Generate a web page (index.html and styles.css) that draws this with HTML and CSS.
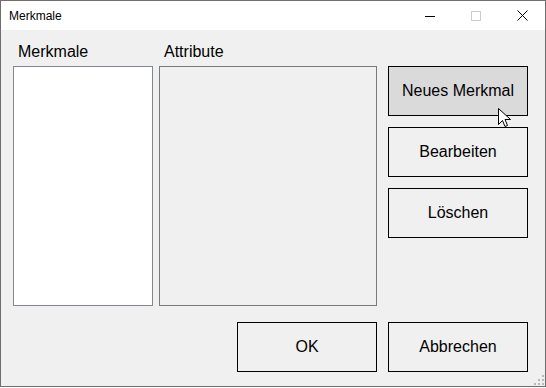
FILE: index.html
```html
<!DOCTYPE html>
<html lang="de">
<head>
  <meta charset="UTF-8" />
  <title>Merkmale</title>
  <link rel="stylesheet" href="styles.css">
</head>
<body>
  <div class="window">
    <div class="titlebar">
      <span class="title">Merkmale</span>
      <div class="caption">
        <span class="cap-btn"><svg width="10" height="10" viewBox="0 0 10 10"><path d="M0 5.5H10" stroke="#000" stroke-width="1"/></svg></span>
        <span class="cap-btn"><svg width="10" height="10" viewBox="0 0 10 10"><rect x="0.5" y="0.5" width="9" height="9" fill="none" stroke="#ccc"/></svg></span>
        <span class="cap-btn"><svg width="11" height="11" viewBox="0 0 11 11"><path d="M0.5 0.5L10.5 10.5M10.5 0.5L0.5 10.5" stroke="#000" stroke-width="1"/></svg></span>
      </div>
    </div>

    <div class="client">
      <div class="panes">
        <div class="pane-label">Merkmale</div>
        <div class="pane-label">Attribute</div>
        <div class="list list-merkmale"></div>
        <div class="list list-attribute"></div>
        <div class="side-buttons">
          <button class="btn btn-hover">Neues Merkmal</button>
          <button class="btn">Bearbeiten</button>
          <button class="btn">Löschen</button>
        </div>
      </div>

      <div class="footer">
        <button class="btn">OK</button>
        <button class="btn">Abbrechen</button>
      </div>

      <!-- size grip -->
      <svg class="grip" width="10" height="10" viewBox="0 0 10 10">
        <rect x="8" y="0" width="2" height="2" fill="#b8b8b8"/>
        <rect x="4" y="4" width="2" height="2" fill="#b8b8b8"/>
        <rect x="8" y="4" width="2" height="2" fill="#b8b8b8"/>
        <rect x="0" y="8" width="2" height="2" fill="#b8b8b8"/>
        <rect x="4" y="8" width="2" height="2" fill="#b8b8b8"/>
        <rect x="8" y="8" width="2" height="2" fill="#b8b8b8"/>
      </svg>
    </div>

    <!-- mouse pointer -->
    <svg class="cursor" width="13" height="20" viewBox="0 0 13 20">
      <path d="M0.5 0.5V16.5L4.5 12.5L7 18.5L9.5 17.5L7 11.5H12.5Z" fill="#fff" stroke="#000" stroke-width="1" stroke-linejoin="miter"/>
    </svg>
  </div>
</body>
</html>
```

FILE: styles.css
```css
body { margin: 0; background: #fff; font-family: "Liberation Sans", Arial, sans-serif; }

.window {
  position: relative;
  width: 546px;
  height: 387px;
  box-sizing: border-box;
  border: 1px solid #6e6e6e;
  background: #f0f0f0;
  display: flex;
  flex-direction: column;
}

/* Title bar */
.titlebar { height: 29px; background: #fff; display: flex; align-items: center; }
.title { padding-left: 8px; font-size: 12px; color: #000; flex: 1; }
.caption { display: flex; align-self: stretch; }
.cap-btn { width: 46px; display: flex; align-items: center; justify-content: center; }

/* Client area */
.client { position: relative; flex: 1; padding: 0 17px 0 12px; }

.panes {
  display: grid;
  grid-template-columns: 140px 218px 145px;
  grid-template-rows: 36px 240px;
  column-gap: 6px;
}
.pane-label {
  align-self: end;
  padding-left: 5px;
  margin-bottom: 5px;
  font-size: 16px;
  line-height: 18px;
  color: #000;
}
.list { box-sizing: border-box; grid-row: 2; }
.list-merkmale { background: #fff; border: 1px solid #828790; }
.list-attribute { background: #f0f0f0; border: 1px solid #7a7a7a; }

.side-buttons {
  grid-row: 2;
  grid-column: 3;
  margin-left: 5px;
  display: flex;
  flex-direction: column;
  gap: 11px;
}

.btn {
  width: 140px;
  height: 50px;
  box-sizing: border-box;
  background: #f0f0f0;
  border: 1px solid #000;
  border-radius: 0;
  padding: 0;
  font-family: "Liberation Sans", Arial, sans-serif;
  font-size: 16px;
  color: #000;
}
.btn-hover { background: #dadada; }

.footer { display: flex; justify-content: flex-end; gap: 11px; margin-top: 16px; }

.grip { position: absolute; right: 1px; bottom: 1px; }
.cursor { position: absolute; left: 497px; top: 107px; }
```
